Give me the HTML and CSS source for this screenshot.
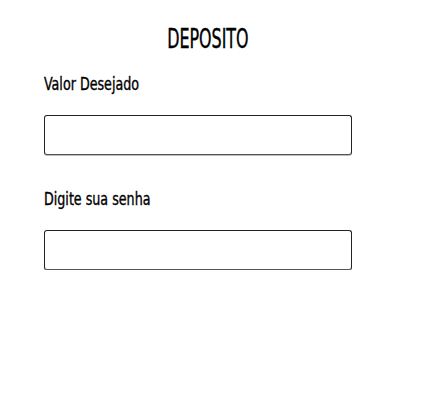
FILE: index.html
```html
<!DOCTYPE html>
<html lang="pt">
<head>
<meta charset="utf-8">
<title>Deposito</title>
<link rel="stylesheet" href="styles.css">
</head>
<body>
<main class="page">
  <h1 class="title"><span class="title-text">DEPOSITO</span></h1>
  <form class="form">
    <label class="field">
      <span class="label">Valor Desejado</span>
      <input class="input" type="text">
    </label>
    <label class="field">
      <span class="label">Digite sua senha</span>
      <input class="input" type="password">
    </label>
  </form>
</main>
</body>
</html>
```
FILE: styles.css
```css
html, body {
  margin: 0;
  padding: 0;
  background: #fff;
}
body {
  font-family: "DejaVu Sans Condensed", "DejaVu Sans", sans-serif;
  font-stretch: condensed;
  color: #000;
}
.page {
  width: 415px;
  padding-top: 24px;
}
.title {
  margin: 0;
  text-align: center;
  font-size: 26px;
  font-weight: normal;
  line-height: 30px;
}
.title-text {
  display: inline-block;
  transform: scaleX(0.68);
  transform-origin: center;
  -webkit-text-stroke: 0.4px #000;
}
.form {
  display: flex;
  flex-direction: column;
  gap: 33px;
  padding-left: 44px;
  margin-top: 19px;
}
.field {
  display: flex;
  flex-direction: column;
  align-items: flex-start;
  gap: 20px;
}
.label {
  display: inline-block;
  font-size: 17px;
  line-height: 22px;
  transform: scaleX(0.83);
  transform-origin: left center;
  white-space: nowrap;
  -webkit-text-stroke: 0.35px #000;
}
.input {
  box-sizing: border-box;
  width: 308px;
  height: 40px;
  margin: 0;
  border: 1px solid #222;
  border-bottom-color: #555;
  border-radius: 3px;
  background: #fff;
  box-shadow: 0 1px 0 #bbb;
}
```
